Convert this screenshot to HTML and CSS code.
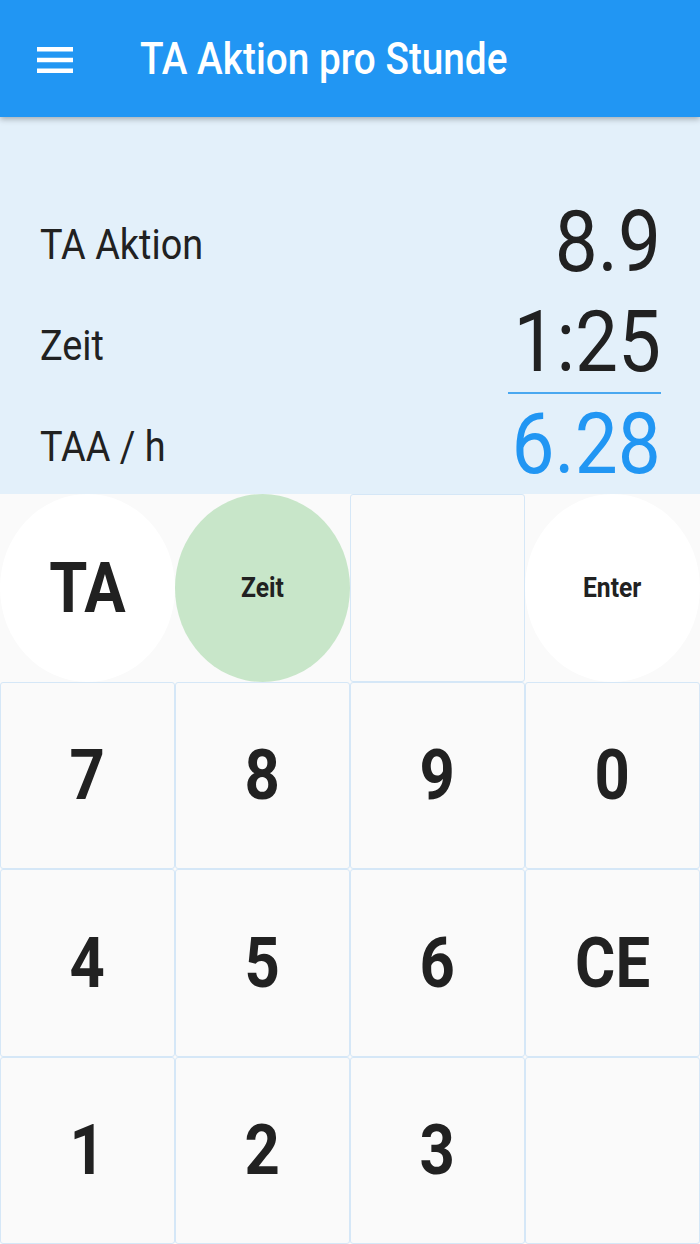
FILE: index.html
```html
<!DOCTYPE html>
<html lang="de">

<head>
    <meta charset="UTF-8">
    <title>TA Aktion pro Stunde</title>
    <link rel="stylesheet" href="styles.css">
</head>

<body>
    <header class="app-bar">
        <svg class="menu-icon" width="36" height="26" viewBox="0 0 36 26">
            <rect x="0" y="0" width="36" height="4.5" fill="#fff"/>
            <rect x="0" y="10.75" width="36" height="4.5" fill="#fff"/>
            <rect x="0" y="21.5" width="36" height="4.5" fill="#fff"/>
        </svg>
        <h1 class="title"><span class="squeeze">TA Aktion pro Stunde</span></h1>
    </header>

    <section class="display">
        <div class="row">
            <span class="label squeeze">TA Aktion</span>
            <span class="value squeeze">8.9</span>
        </div>
        <div class="row">
            <span class="label squeeze">Zeit</span>
            <span class="value value-line squeeze">1:25</span>
        </div>
        <div class="row">
            <span class="label squeeze">TAA / h</span>
            <span class="value value-result squeeze">6.28</span>
        </div>
    </section>

    <main class="keypad">
        <button class="key key-round key-white"><span class="squeeze">TA</span></button>
        <button class="key key-round key-green key-small"><span class="squeeze">Zeit</span></button>
        <button class="key"></button>
        <button class="key key-round key-white key-small"><span class="squeeze">Enter</span></button>

        <button class="key"><span class="squeeze">7</span></button>
        <button class="key"><span class="squeeze">8</span></button>
        <button class="key"><span class="squeeze">9</span></button>
        <button class="key"><span class="squeeze">0</span></button>

        <button class="key"><span class="squeeze">4</span></button>
        <button class="key"><span class="squeeze">5</span></button>
        <button class="key"><span class="squeeze">6</span></button>
        <button class="key"><span class="squeeze">CE</span></button>

        <button class="key"><span class="squeeze">1</span></button>
        <button class="key"><span class="squeeze">2</span></button>
        <button class="key"><span class="squeeze">3</span></button>
        <button class="key"></button>
    </main>
</body>

</html>
```

FILE: styles.css
```css
body {
    margin: 0;
    height: 1244px;
    overflow: hidden;
    font-family: Roboto, "Noto Sans", sans-serif;
    color: #212121;
    background-color: #fafafa;
}

.squeeze {
    display: inline-block;
    transform: scaleX(0.88);
    transform-origin: center center;
}

/* app bar */

.app-bar {
    position: relative;
    z-index: 1;
    height: 117px;
    display: flex;
    align-items: center;
    background-color: #2196f3;
    box-shadow: 0 2px 6px rgba(0, 0, 0, 0.3);
}

.menu-icon {
    margin-left: 37px;
    margin-top: 2px;
}

.title {
    margin: 0 0 0 67px;
    padding-top: 2px;
    font-size: 44px;
    font-weight: 500;
    color: #fff;
    line-height: 1.2;
}

.title .squeeze {
    transform-origin: left center;
}

/* display */

.display {
    height: 377px;
    box-sizing: border-box;
    padding: 75px 39px 0 40px;
    background-color: #e3f0fa;
}

.row {
    display: flex;
    justify-content: space-between;
    align-items: center;
}

.label {
    font-size: 43px;
    padding-top: 3px;
    transform-origin: left center;
}

.value {
    font-size: 85px;
    line-height: 100px;
    padding-left: 6px;
    transform: scaleX(0.9);
    transform-origin: right center;
}

.value-line {
    border-bottom: 2px solid #4aa8f0;
}

.value-result {
    color: #2196f3;
}

/* keypad */

.keypad {
    height: 750px;
    display: grid;
    grid-template-columns: repeat(4, 1fr);
    grid-template-rows: repeat(4, 1fr);
}

.key {
    margin: 0;
    padding: 0;
    border: 1px solid #d5e7f7;
    border-radius: 3px;
    background-color: #fafafa;
    font-family: Roboto, "Noto Sans", sans-serif;
    font-size: 70px;
    font-weight: 700;
    color: #212121;
    display: flex;
    align-items: center;
    justify-content: center;
}

.key-round {
    border-color: transparent;
    border-radius: 50%;
}

.key-white {
    background-color: #fff;
}

.key-green {
    background-color: #c8e6c9;
}

.key-small {
    font-size: 28px;
    font-weight: 700;
}
```
